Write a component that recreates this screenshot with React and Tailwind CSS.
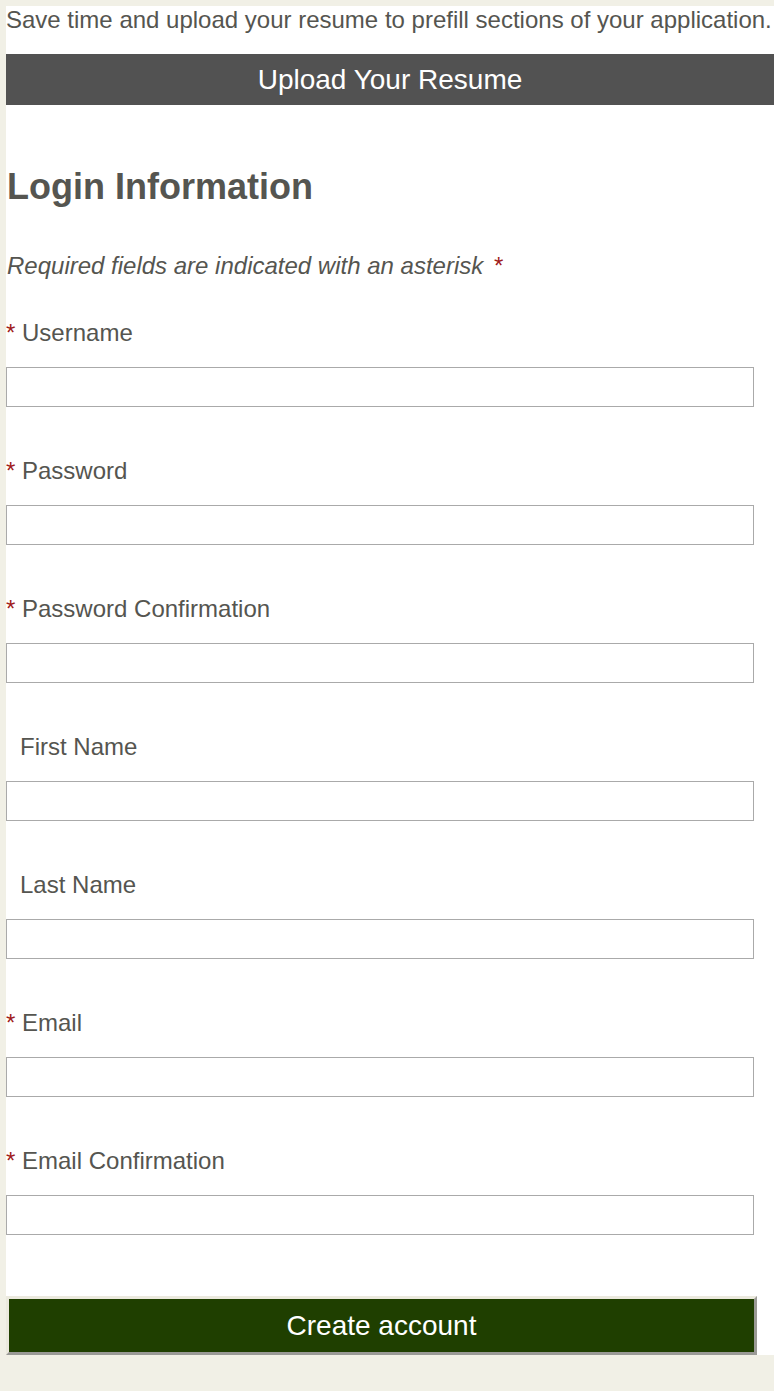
import React from "react";

const fields = [
  { label: "Username", required: true, type: "text" },
  { label: "Password", required: true, type: "password" },
  { label: "Password Confirmation", required: true, type: "password" },
  { label: "First Name", required: false, type: "text" },
  { label: "Last Name", required: false, type: "text" },
  { label: "Email", required: true, type: "email" },
  { label: "Email Confirmation", required: true, type: "email" },
];

const Field = ({ field, first }) => (
  <div className={first ? "mt-[39px]" : "mt-[50px]"}>
    <label className="block text-[24px] leading-[28px] text-[#555550]">
      <span className={field.required ? "text-[#a01c1c]" : "invisible -mr-[2px]"}>*</span>{" "}
      {field.label}
    </label>
    <input
      type={field.type}
      className="mt-[20px] block h-[40px] w-[748px] border border-[#aaaaaa] bg-white px-2 text-[20px] outline-none"
    />
  </div>
);

const App = () => {
  return (
    <div
      className="min-h-[1391px] bg-[#f1f0e6] pl-[6px] pt-[6px]"
      style={{ fontFamily: '"Liberation Sans", Arial, sans-serif' }}
    >
      <div className="overflow-hidden bg-white">
        <p className="whitespace-nowrap text-[24px] leading-[28px] text-[#555550]">
          Save time and upload your resume to prefill sections of your application.
        </p>

        <button className="mt-[20px] block h-[51px] w-full bg-[#525252] text-center text-[28px] text-white">
          Upload Your Resume
        </button>

        <h1 className="mt-[62px] pl-[1px] text-[36px] font-bold leading-[40px] text-[#555550]">
          Login Information
        </h1>

        <p className="mt-[45px] pl-[1px] text-[24px] italic leading-[28px] text-[#555550]">
          Required fields are indicated with an asterisk{" "}
          <span className="ml-[3px] text-[#a01c1c]">*</span>
        </p>

        {fields.map((f, i) => (
          <Field key={f.label} field={f} first={i === 0} />
        ))}

        <button className="mt-[61px] block h-[59px] w-[751px] border-[3px] border-t-[#ebe9de] border-l-[#ebe9de] border-r-[#9a9a96] border-b-[#9a9a96] bg-[#1f3f00] text-center text-[28px] text-white">
          Create account
        </button>
      </div>
    </div>
  );
};

export default App;
